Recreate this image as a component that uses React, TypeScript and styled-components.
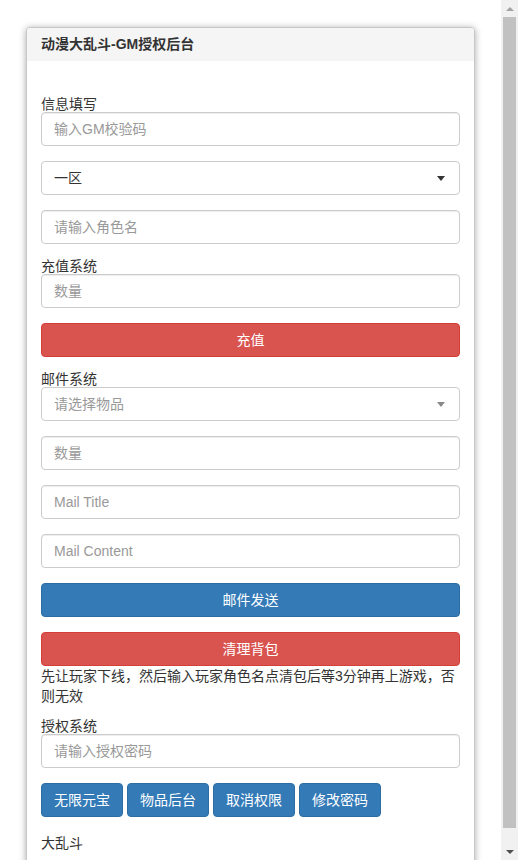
import styled, { createGlobalStyle } from 'styled-components';

const GlobalStyle = createGlobalStyle`
  html, body {
    margin: 0;
    padding: 0;
    background: #fff;
  }
  body {
    font-family: 'Liberation Sans', 'Noto Sans CJK SC', sans-serif;
    font-size: 14px;
    line-height: 20px;
    color: #333;
  }
  * {
    box-sizing: border-box;
  }
`;

export default function App() {
  return (
    <>
      <GlobalStyle />
      <Viewport>
        <Main>
          <Panel>
            <PanelHeading>动漫大乱斗-GM授权后台</PanelHeading>
            <PanelBody>
              <Group>
                <Label>信息填写</Label>
                <Input placeholder="输入GM校验码" />
              </Group>
              <Group>
                <SelectBox>
                  <span>一区</span>
                  <Caret $tone="#333" />
                </SelectBox>
              </Group>
              <Group>
                <Input placeholder="请输入角色名" />
              </Group>
              <Group>
                <Label>充值系统</Label>
                <Input placeholder="数量" />
              </Group>
              <Group>
                <Button $variant="danger" $block>
                  充值
                </Button>
              </Group>
              <Group>
                <Label>邮件系统</Label>
                <SelectBox $placeholder>
                  <span>请选择物品</span>
                  <Caret $tone="#888" />
                </SelectBox>
              </Group>
              <Group>
                <Input placeholder="数量" />
              </Group>
              <Group>
                <Input placeholder="Mail Title" />
              </Group>
              <Group>
                <Input placeholder="Mail Content" />
              </Group>
              <Group>
                <Button $variant="primary" $block>
                  邮件发送
                </Button>
              </Group>
              <Button $variant="danger" $block>
                清理背包
              </Button>
              <Note>先让玩家下线，然后输入玩家角色名点清包后等3分钟再上游戏，否则无效</Note>
              <Group>
                <Label>授权系统</Label>
                <Input placeholder="请输入授权密码" />
              </Group>
              <ButtonRow>
                <Button $variant="primary">无限元宝</Button>
                <Button $variant="primary">物品后台</Button>
                <Button $variant="primary">取消权限</Button>
                <Button $variant="primary">修改密码</Button>
              </ButtonRow>
              <Footer>大乱斗</Footer>
            </PanelBody>
          </Panel>
        </Main>
        <ScrollBar>
          <ScrollArrow>
            <Arrow $dir="up" />
          </ScrollArrow>
          <Track>
            <Thumb />
          </Track>
          <ScrollArrow>
            <Arrow $dir="down" />
          </ScrollArrow>
        </ScrollBar>
      </Viewport>
    </>
  );
}

const Viewport = styled.div`
  display: flex;
  height: 100vh;
  overflow: hidden;
`;

const Main = styled.div`
  flex: 1;
  min-width: 0;
  overflow: hidden;
  padding: 27px 26px 8px;
`;

const ScrollBar = styled.div`
  width: 17px;
  flex-shrink: 0;
  display: flex;
  flex-direction: column;
  background: #f1f1f1;
`;

const ScrollArrow = styled.div`
  height: 17px;
  display: flex;
  align-items: center;
  justify-content: center;
`;

const Arrow = styled.i<{ $dir: 'up' | 'down' }>`
  width: 0;
  height: 0;
  border-style: solid;
  border-width: ${(p) => (p.$dir === 'up' ? '0 4px 4px 4px' : '4px 4px 0 4px')};
  border-color: ${(p) =>
    p.$dir === 'up'
      ? 'transparent transparent #a3a3a3 transparent'
      : '#505050 transparent transparent transparent'};
`;

const Track = styled.div`
  flex: 1;
  display: flex;
  flex-direction: column;
  padding: 0 2px 15px;
`;

const Thumb = styled.div`
  flex: 1;
  background: #c1c1c1;
`;

const Panel = styled.div`
  background: #fff;
  border: 1px solid #c8c8c8;
  border-radius: 4px;
  box-shadow: 0 1px 7px rgba(0, 0, 0, 0.35);
  overflow: hidden;
`;

const PanelHeading = styled.div`
  background: #f5f5f5;
  padding: 6px 14px 7px;
  font-weight: bold;
  font-size: 14px;
  line-height: 20px;
  color: #333;
`;

const PanelBody = styled.div`
  padding: 36px 14px 15px;
`;

const Group = styled.div`
  margin-bottom: 15px;
`;

const Label = styled.label`
  display: block;
  line-height: 15px;
  font-size: 14px;
  color: #333;
`;

const Input = styled.input`
  display: block;
  width: 100%;
  height: 34px;
  padding: 6px 12px;
  font-family: 'Liberation Sans', 'Noto Sans CJK SC', sans-serif;
  font-size: 14px;
  line-height: 20px;
  color: #555;
  background: #fff;
  border: 1px solid #ccc;
  border-radius: 4px;
  box-shadow: inset 0 1px 1px rgba(0, 0, 0, 0.075);
  outline: none;

  &::placeholder {
    color: #999;
  }
`;

const SelectBox = styled.div<{ $placeholder?: boolean }>`
  display: flex;
  align-items: center;
  justify-content: space-between;
  height: 34px;
  padding: 6px 14px 6px 12px;
  border: 1px solid #ccc;
  border-radius: 4px;
  background: #fff;
  color: ${(p) => (p.$placeholder ? '#999' : '#333')};
`;

const Caret = styled.i<{ $tone: string }>`
  width: 0;
  height: 0;
  border-style: solid;
  border-width: 5px 4px 0 4px;
  border-color: ${(p) => p.$tone} transparent transparent transparent;
`;

const Button = styled.button<{ $variant: 'primary' | 'danger'; $block?: boolean }>`
  display: ${(p) => (p.$block ? 'block' : 'inline-block')};
  width: ${(p) => (p.$block ? '100%' : 'auto')};
  height: 34px;
  padding: 6px 12px;
  font-family: 'Liberation Sans', 'Noto Sans CJK SC', sans-serif;
  font-size: 14px;
  line-height: 20px;
  color: #fff;
  background: ${(p) => (p.$variant === 'primary' ? '#337ab7' : '#d9534f')};
  border: 1px solid ${(p) => (p.$variant === 'primary' ? '#2e6da4' : '#d43f3a')};
  border-radius: 4px;
  cursor: pointer;
`;

const Note = styled.p`
  margin: 0 0 13px;
  line-height: 20px;
`;

const ButtonRow = styled.div`
  display: flex;
  gap: 4px;
  margin-bottom: 16px;
`;

const Footer = styled.div`
  line-height: 20px;
`;
